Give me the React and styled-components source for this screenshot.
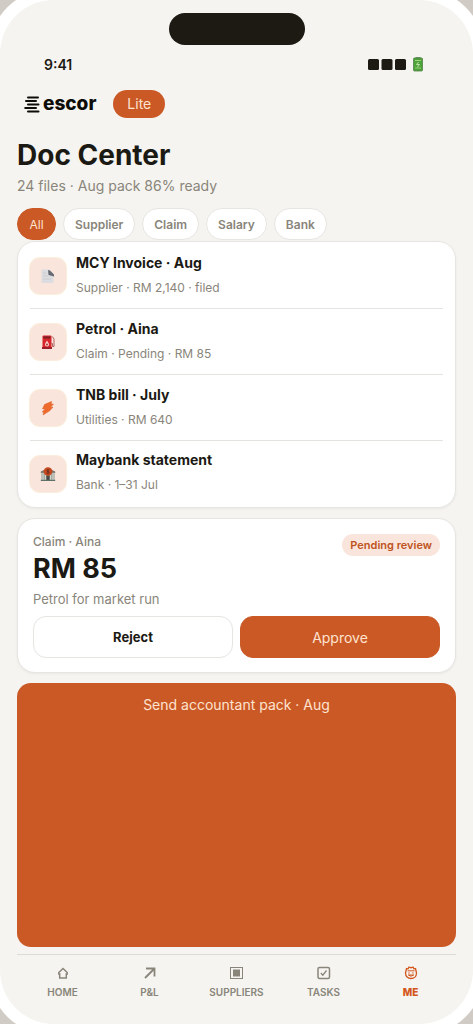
import React, { useState } from 'react'
import styled, { createGlobalStyle } from 'styled-components';

const GlobalStyle = createGlobalStyle`
    * {
        box-sizing: border-box;
    }
    body {
        margin: 0;
        background: #d0cbc4;
        color: #1b1913;
        font-family: "Inter", "Liberation Sans", sans-serif;
    }
    button {
        font-family: inherit;
        cursor: pointer;
    }
    h1, p {
        margin: 0;
    }
`;

const Phone = styled.div`
    display: flex;
    flex-direction: column;
    min-height: 100vh;
    padding: 13px 17px 0;
    background: #f5f4f0;
    border-radius: 54px;
    box-shadow: 0 0 0 12px #ffffff;
    overflow: hidden;
`;

const Notch = styled.div`
    width: 136px;
    height: 32px;
    margin: 0 auto;
    border-radius: 16px;
    background: #1d1a13;
`;

const StatusBar = styled.div`
    display: flex;
    align-items: center;
    justify-content: space-between;
    height: 20px;
    margin-top: 9px;
    padding: 0 32px 0 27px;
    font-size: 14px;
    font-weight: 600;
`;

const Header = styled.header`
    display: flex;
    align-items: center;
    gap: 17px;
    margin-top: 16px;
    padding-left: 7px;
`;

const Logo = styled.div`
    display: flex;
    align-items: center;
    gap: 3px;
    color: #0d0c09;
    font-size: 19px;
    font-weight: 800;
    line-height: 24px;
`;

const PlanTag = styled.span`
    padding: 0 14px;
    border-radius: 14px;
    background: #ca5926;
    color: #ffe3cf;
    font-size: 14px;
    line-height: 28px;
`;

const Title = styled.h1`
    margin-top: 20px;
    font-size: 28px;
    font-weight: 700;
    line-height: 34px;
`;

const Subtitle = styled.p`
    margin-top: 4px;
    color: #89857a;
    font-size: 14px;
    line-height: 20px;
`;

const Chips = styled.div`
    display: flex;
    gap: 7px;
    margin-top: 12px;
`;

const Chip = styled.button`
    min-width: 39px;
    height: 32px;
    padding: 0 11px;
    border: 1px solid ${p => (p.$active ? '#ca5926' : '#e7e5e1')};
    border-radius: 16px;
    background: ${p => (p.$active ? '#ca5926' : '#ffffff')};
    color: ${p => (p.$active ? '#ffe3cf' : '#89857a')};
    font-size: 12px;
    font-weight: ${p => (p.$active ? 400 : 600)};
`;

const Card = styled.section`
    border: 1px solid #e7e5e1;
    border-radius: 18px;
    background: #ffffff;
    box-shadow: 0 1px 3px rgba(30, 25, 15, 0.05);
`;

const FileList = styled(Card)`
    margin-top: 1px;
    padding: 1px 12px 0;
`;

const FileRow = styled.div`
    display: flex;
    align-items: center;
    gap: 10px;
    height: 66px;
    padding-bottom: 2px;
    border-bottom: 1px solid #e5e3df;

    &:last-child {
        padding-bottom: 4px;
        border-bottom: none;
    }
`;

const FileIcon = styled.div`
    display: grid;
    place-items: center;
    width: 36px;
    height: 36px;
    margin-top: 3px;
    border-radius: 10px;
    background: #f9e5db;
    box-shadow: 0 0 0 1px #fbeedd;
`;

const FileName = styled.div`
    font-size: 14px;
    font-weight: 700;
    line-height: 20px;
`;

const FileMeta = styled.div`
    margin-top: 6px;
    color: #89857a;
    font-size: 12px;
    line-height: 18px;
`;

const ClaimCard = styled(Card)`
    margin-top: 10px;
    padding: 15px 15px 14px;
`;

const ClaimTop = styled.div`
    display: flex;
    align-items: flex-start;
    justify-content: space-between;
`;

const ClaimLabel = styled.div`
    color: #89857a;
    font-size: 12px;
    font-weight: 500;
    line-height: 16px;
`;

const Amount = styled.div`
    margin-top: 2px;
    font-size: 27px;
    font-weight: 700;
    line-height: 34px;
`;

const Badge = styled.span`
    padding: 0 8px;
    border-radius: 11px;
    background: #f9e5db;
    color: #bf5322;
    font-size: 11px;
    font-weight: 600;
    line-height: 22px;
`;

const ClaimNote = styled.p`
    margin-top: 4px;
    color: #89857a;
    font-size: 13px;
    line-height: 18px;
`;

const Actions = styled.div`
    display: grid;
    grid-template-columns: 1fr 1fr;
    gap: 7px;
    margin-top: 8px;
`;

const ActionButton = styled.button`
    height: 42px;
    border: 1px solid ${p => (p.$primary ? '#ca5926' : '#e7e5e1')};
    border-radius: 13px;
    background: ${p => (p.$primary ? '#ca5926' : '#ffffff')};
    color: ${p => (p.$primary ? '#ffe3cf' : '#1b1913')};
    font-size: ${p => (p.$primary ? '14px' : '13px')};
    font-weight: ${p => (p.$primary ? 400 : 700)};
`;

const SendButton = styled.button`
    display: flex;
    flex: 1;
    align-items: flex-start;
    justify-content: center;
    min-height: 48px;
    margin: 10px 0 7px;
    padding: 12px 16px;
    border: none;
    border-radius: 14px;
    background: #ca5926;
    color: #ffe3cf;
    font-size: 14px;
    line-height: 20px;
`;

const TabBar = styled.nav`
    display: grid;
    grid-template-columns: repeat(5, 1fr);
    height: 70px;
    padding: 10px 2px 0;
    border-top: 1px solid #dddbd6;
`;

const Tab = styled.a`
    display: flex;
    flex-direction: column;
    align-items: center;
    gap: 4px;
    color: ${p => (p.$active ? '#d4561d' : '#89857a')};
    font-size: 10px;
    font-weight: ${p => (p.$active ? 800 : 600)};
    line-height: 14px;
    text-decoration: none;
`;

const LogoMark = () => (
    <svg width="16" height="17" viewBox="0 0 16 17" fill="none" stroke="#0d0c09" strokeWidth="2" strokeLinecap="round">
        <path d="M4 1.500H14M2 5H12M4 8.500H14.500M1.200 12H12M4 15.500H14.500" />
    </svg>
);

const StatusIcons = () => (
    <svg width="56" height="16" viewBox="0 0 56 16">
        <g fill="#1d1a13">
            <rect x="0" y="3" width="11" height="11" rx="1.5" />
            <rect x="13.5" y="3" width="11" height="11" rx="1.5" />
            <rect x="27" y="3" width="11" height="11" rx="1.5" />
        </g>
        <rect x="47.5" y="1" width="5" height="2" fill="#799370" />
        <rect x="45.5" y="2" width="9" height="13" rx="1" fill="#4da238" stroke="#52804a" strokeWidth="0.8" />
        <path d="M47 4.5h6M47 12h6" stroke="#9bd17d" strokeWidth="1" />
        <path d="M50.5 6L48.5 8.5h3L49.5 11" stroke="#c7ebaf" strokeWidth="0.9" fill="none" />
    </svg>
);

const PageIcon = () => (
    <svg width="16" height="16" viewBox="0 0 16 16">
        <path d="M1.500 1.500H9l4.500 5v8.500h-12z" fill="#dcdde0" />
        <path d="M8 2l2 .5 4 4v2L8.500 7z" fill="#666b73" />
        <path d="M3 5h3.500M3 8h5M3 11h8" stroke="#c5c8ce" strokeWidth="0.800" />
    </svg>
);

const FuelIcon = () => (
    <svg width="16" height="16" viewBox="0 0 16 16">
        <rect x="2.500" y="1.500" width="9" height="13" rx="1" fill="#d8262d" />
        <rect x="2" y="13" width="10" height="2" fill="#9f1f29" />
        <rect x="3.500" y="2.500" width="7" height="2" fill="#792027" />
        <path d="M7 6.500C5.600 8.700 5 9.500 5 10.600a2 2 0 004 0C9 9.500 8.400 8.700 7 6.500z" fill="#f8d2cb" />
        <circle cx="7" cy="10.500" r="0.900" fill="#a3212a" />
        <path d="M11.500 9.500h1v3H14V5L12.300 2.500" stroke="#a75354" strokeWidth="0.900" fill="none" />
    </svg>
);

const BoltIcon = () => (
    <svg width="16" height="16" viewBox="0 0 16 16">
        <path d="M11.500 1.500L4.500 4.500 2.500 9l2.800-.3L2.300 12l1.500.2L3 15l7-4.500 3-3.500-2.500.2L13.500 4l-2.300.3z" fill="#ef6b2d" stroke="#d65620" strokeWidth="0.500" />
    </svg>
);

const BankIcon = () => (
    <svg width="16" height="16" viewBox="0 0 16 16">
        <path d="M.8 5.500L5 3.500h6l4.200 2v1.500H.8z" fill="#7d746b" />
        <path d="M1.500 6.500h13v8h-13z" fill="#8d968c" />
        <path d="M3 7v7M5.300 7v7M10.700 7v7M13 7v7" stroke="#e3e4dc" strokeWidth="1.100" />
        <rect x="6.500" y="9.500" width="3" height="5" fill="#4b4948" />
        <path d="M.8 13.800h14.400v1.200H.8z" fill="#5e7168" />
        <circle cx="8" cy="5.500" r="4.300" fill="#c7481f" />
        <path d="M9.400 4H7.600a.8.8 0 000 1.600h.8a.8.8 0 010 1.600H6.600M8 3v5.200" stroke="#66301e" strokeWidth="0.800" fill="none" />
    </svg>
);

const HomeIcon = () => (
    <svg width="16" height="16" viewBox="0 0 16 16" fill="none" stroke="currentColor" strokeWidth="1.500">
        <path d="M4.700 13V9H3.800V7.500L8 3.500l4.200 4V9h-.9v4z" />
    </svg>
);

const ArrowIcon = () => (
    <svg width="16" height="16" viewBox="0 0 16 16" fill="none" stroke="currentColor" strokeWidth="1.800">
        <path d="M3 13L12.500 3.500M4 3.500H12.500V11.500" />
    </svg>
);

const SquareIcon = () => (
    <svg width="16" height="16" viewBox="0 0 16 16">
        <rect x="1.500" y="2.500" width="12" height="11" fill="none" stroke="currentColor" />
        <rect x="4" y="4.500" width="7" height="7" fill="currentColor" />
    </svg>
);

const CheckIcon = () => (
    <svg width="16" height="16" viewBox="0 0 16 16" fill="none" stroke="currentColor" strokeWidth="1.500">
        <rect x="2" y="2.500" width="11.500" height="11" rx="1.500" />
        <path d="M4.800 8l2 2.200L10.500 5.500" strokeWidth="1.300" />
    </svg>
);

const FaceIcon = () => (
    <svg width="16" height="16" viewBox="0 0 16 16" fill="none" stroke="currentColor">
        <path d="M3.500 3.500L5 4l1-2 2 .8 2-.8 1 2 1.500-.5 1 4.500c0 3.500-2.500 5.500-5.500 5.500S2.500 11.500 2.500 8z" strokeWidth="1.300" strokeLinejoin="round" />
        <path d="M4.500 5.800h7" strokeWidth="1" />
        <path d="M5.300 8h1.500M9.200 8h1.500M5.300 10Q8 12.300 10.700 10z" strokeWidth="1" />
    </svg>
);

const filters = ['All', 'Supplier', 'Claim', 'Salary', 'Bank'];

const files = [
    { name: 'MCY Invoice · Aug', meta: 'Supplier · RM 2,140 · filed', Icon: PageIcon },
    { name: 'Petrol · Aina', meta: 'Claim · Pending · RM 85', Icon: FuelIcon },
    { name: 'TNB bill · July', meta: 'Utilities · RM 640', Icon: BoltIcon },
    { name: 'Maybank statement', meta: 'Bank · 1–31 Jul', Icon: BankIcon },
];

const tabs = [
    { label: 'HOME', Icon: HomeIcon },
    { label: 'P&L', Icon: ArrowIcon },
    { label: 'SUPPLIERS', Icon: SquareIcon },
    { label: 'TASKS', Icon: CheckIcon },
    { label: 'ME', Icon: FaceIcon },
];

const App = () => {
    const [filter, setFilter] = useState('All');

    return (
        <>
            <GlobalStyle />
            <Phone>
                <Notch />
                <StatusBar>
                    <span>9:41</span>
                    <StatusIcons />
                </StatusBar>
                <Header>
                    <Logo><LogoMark />escor</Logo>
                    <PlanTag>Lite</PlanTag>
                </Header>
                <Title>Doc Center</Title>
                <Subtitle>24 files · Aug pack 86% ready</Subtitle>
                <Chips>
                    {filters.map(name => (
                        <Chip key={name} $active={name === filter} onClick={() => setFilter(name)}>{name}</Chip>
                    ))}
                </Chips>
                <FileList>
                    {files.map(({ name, meta, Icon }) => (
                        <FileRow key={name}>
                            <FileIcon><Icon /></FileIcon>
                            <div>
                                <FileName>{name}</FileName>
                                <FileMeta>{meta}</FileMeta>
                            </div>
                        </FileRow>
                    ))}
                </FileList>
                <ClaimCard>
                    <ClaimTop>
                        <div>
                            <ClaimLabel>Claim · Aina</ClaimLabel>
                            <Amount>RM 85</Amount>
                        </div>
                        <Badge>Pending review</Badge>
                    </ClaimTop>
                    <ClaimNote>Petrol for market run</ClaimNote>
                    <Actions>
                        <ActionButton>Reject</ActionButton>
                        <ActionButton $primary>Approve</ActionButton>
                    </Actions>
                </ClaimCard>
                <SendButton>Send accountant pack · Aug</SendButton>
                <TabBar>
                    {tabs.map(({ label, Icon }) => (
                        <Tab key={label} href="#" $active={label === 'ME'}>
                            <Icon />
                            {label}
                        </Tab>
                    ))}
                </TabBar>
            </Phone>
        </>
    );
};

export default App
